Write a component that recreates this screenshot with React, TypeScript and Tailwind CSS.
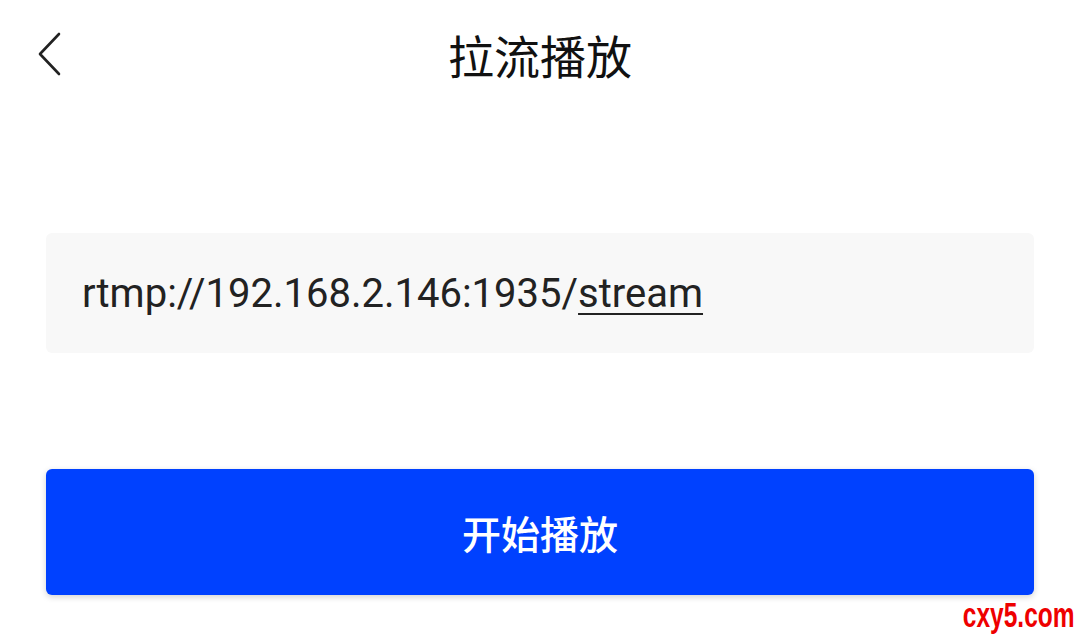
import React from "react";

export default function App() {
  return (
    <div className="w-[1080px] h-[638px] bg-white relative overflow-hidden" style={{ fontFamily: '"Noto Sans", "Noto Sans CJK SC", sans-serif' }}>
      <div className="h-[110px] flex items-start pt-[22px] relative">
        <div className="absolute left-[36px] top-[32px]">
          <svg width="28" height="44" viewBox="0 0 28 44" fill="none">
            <path d="M23 2 L4 22 L23 42" stroke="#222" strokeWidth="2.6" strokeLinecap="round" strokeLinejoin="round" />
          </svg>
        </div>
        <div className="w-full text-center text-[46px] leading-[64px] text-[#111]" style={{ fontFamily: '"Noto Sans CJK SC", sans-serif' }}>
          拉流播放
        </div>
      </div>
      <div className="px-[46px] pt-[123px]">
        <div className="h-[120px] bg-[#f8f8f8] rounded-[6px] flex items-center pl-[36px]">
          <span className="text-[40px] text-[#222] leading-none pt-[2px]" style={{ fontFamily: 'Roboto, "Noto Sans", sans-serif' }}>
            rtmp://192.168.2.146:1935/<span className="underline underline-offset-[6px] decoration-[2px]">stream</span>
          </span>
        </div>
        <div className="mt-[116px] h-[126px] bg-[#0041ff] rounded-[6px] shadow-[0_2px_6px_rgba(0,0,0,0.18)] flex items-center justify-center">
          <span className="text-white text-[39px] font-medium" style={{ fontFamily: '"Noto Sans CJK SC", sans-serif' }}>开始播放</span>
        </div>
      </div>
      <div className="absolute right-[5px] bottom-[6px] text-[#ee0000] text-[35px] font-bold leading-none origin-right scale-x-[0.7]" style={{ fontFamily: '"Liberation Sans", sans-serif' }}>
        cxy5.com
      </div>
    </div>
  );
}
